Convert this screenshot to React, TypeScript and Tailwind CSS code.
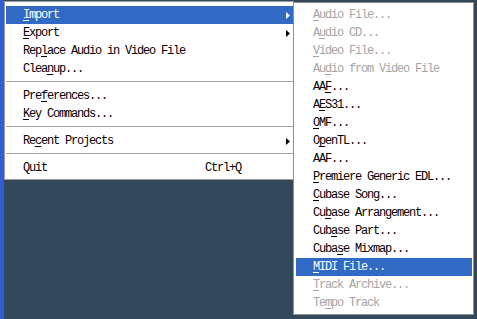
import React from "react";

type Item = {
  label: string;
  u?: number; // index of the mnemonic letter
  shortcut?: string;
  arrow?: boolean;
  active?: boolean;
  disabled?: boolean;
};

const MAIN: (Item | "sep")[] = [
  { label: "Import", u: 0, arrow: true, active: true },
  { label: "Export", u: 0, arrow: true },
  { label: "Replace Audio in Video File", u: 3 },
  { label: "Cleanup...", u: 4 },
  "sep",
  { label: "Preferences...", u: 3 },
  { label: "Key Commands...", u: 0 },
  "sep",
  { label: "Recent Projects", u: 2, arrow: true },
  "sep",
  { label: "Quit", shortcut: "Ctrl+Q" },
];

const IMPORT: Item[] = [
  { label: "Audio File...", u: 0, disabled: true },
  { label: "Audio CD...", u: 1, disabled: true },
  { label: "Video File...", u: 0, disabled: true },
  { label: "Audio from Video File", u: 2, disabled: true },
  { label: "AAF...", u: 2 },
  { label: "AES31...", u: 1 },
  { label: "OMF...", u: 0 },
  { label: "OpenTL...", u: 1 },
  { label: "AAF..." },
  { label: "Premiere Generic EDL...", u: 0 },
  { label: "Cubase Song...", u: 0 },
  { label: "Cubase Arrangement...", u: 2 },
  { label: "Cubase Part...", u: 3 },
  { label: "Cubase Mixmap...", u: 4 },
  { label: "MIDI File...", u: 0, active: true },
  { label: "Track Archive...", u: 0, disabled: true },
  { label: "Tempo Track", u: 2, disabled: true },
];

function Label({ text, u }: { text: string; u?: number }) {
  if (u === undefined) return <span>{text}</span>;
  return (
    <span>
      {text.slice(0, u)}
      <u className="underline-offset-2">{text[u]}</u>
      {text.slice(u + 1)}
    </span>
  );
}

function Arrow({ white }: { white?: boolean }) {
  return (
    <svg width="4" height="7" viewBox="0 0 4 7" className="shrink-0">
      <path d="M0 0 L4 3.5 L0 7 Z" fill={white ? "#ffffff" : "#000000"} />
    </svg>
  );
}

function Row({ item }: { item: Item }) {
  const color = item.active
    ? "bg-[#316ac5] text-white"
    : item.disabled
      ? "text-[#a5a5a5]"
      : "text-black";
  return (
    <div className={`flex h-[18px] items-center pl-[17px] pr-[3px] whitespace-pre ${color}`}>
      <Label text={item.label} u={item.u} />
      <div className="flex-1" />
      {item.shortcut && <span className="mr-[49px]">{item.shortcut}</span>}
      {item.arrow && <Arrow white={item.active} />}
    </div>
  );
}

function Separator() {
  return (
    <div className="flex h-[9px] items-start pt-[3px]">
      <div className="h-px w-full bg-[#a3a3a3]" />
    </div>
  );
}

export default function App() {
  return (
    <div
      className="relative flex h-[319px] w-[477px] overflow-hidden bg-[#34485c] text-[12px] leading-none tracking-[-1.2px]"
      style={{ fontFamily: '"Liberation Mono", monospace' }}
    >
      <div className="w-[4px] shrink-0 bg-[#2f5fd3]" />

      <div className="flex flex-col">
        <div className="mt-[1px] w-[290px] border border-[#9a9a9a] bg-white pt-[4px] pb-[2px] pl-[1px]">
          {MAIN.map((item, i) =>
            item === "sep" ? <Separator key={i} /> : <Row key={i} item={item} />
          )}
        </div>
      </div>

      <div className="absolute left-[293px] top-[2px] w-[181px] border border-[#8f8f8f] bg-white pt-[3px] pb-[2px] pl-[2px] pr-[1px]">
        {IMPORT.map((item, i) => (
          <Row key={i} item={item} />
        ))}
      </div>
    </div>
  );
}
